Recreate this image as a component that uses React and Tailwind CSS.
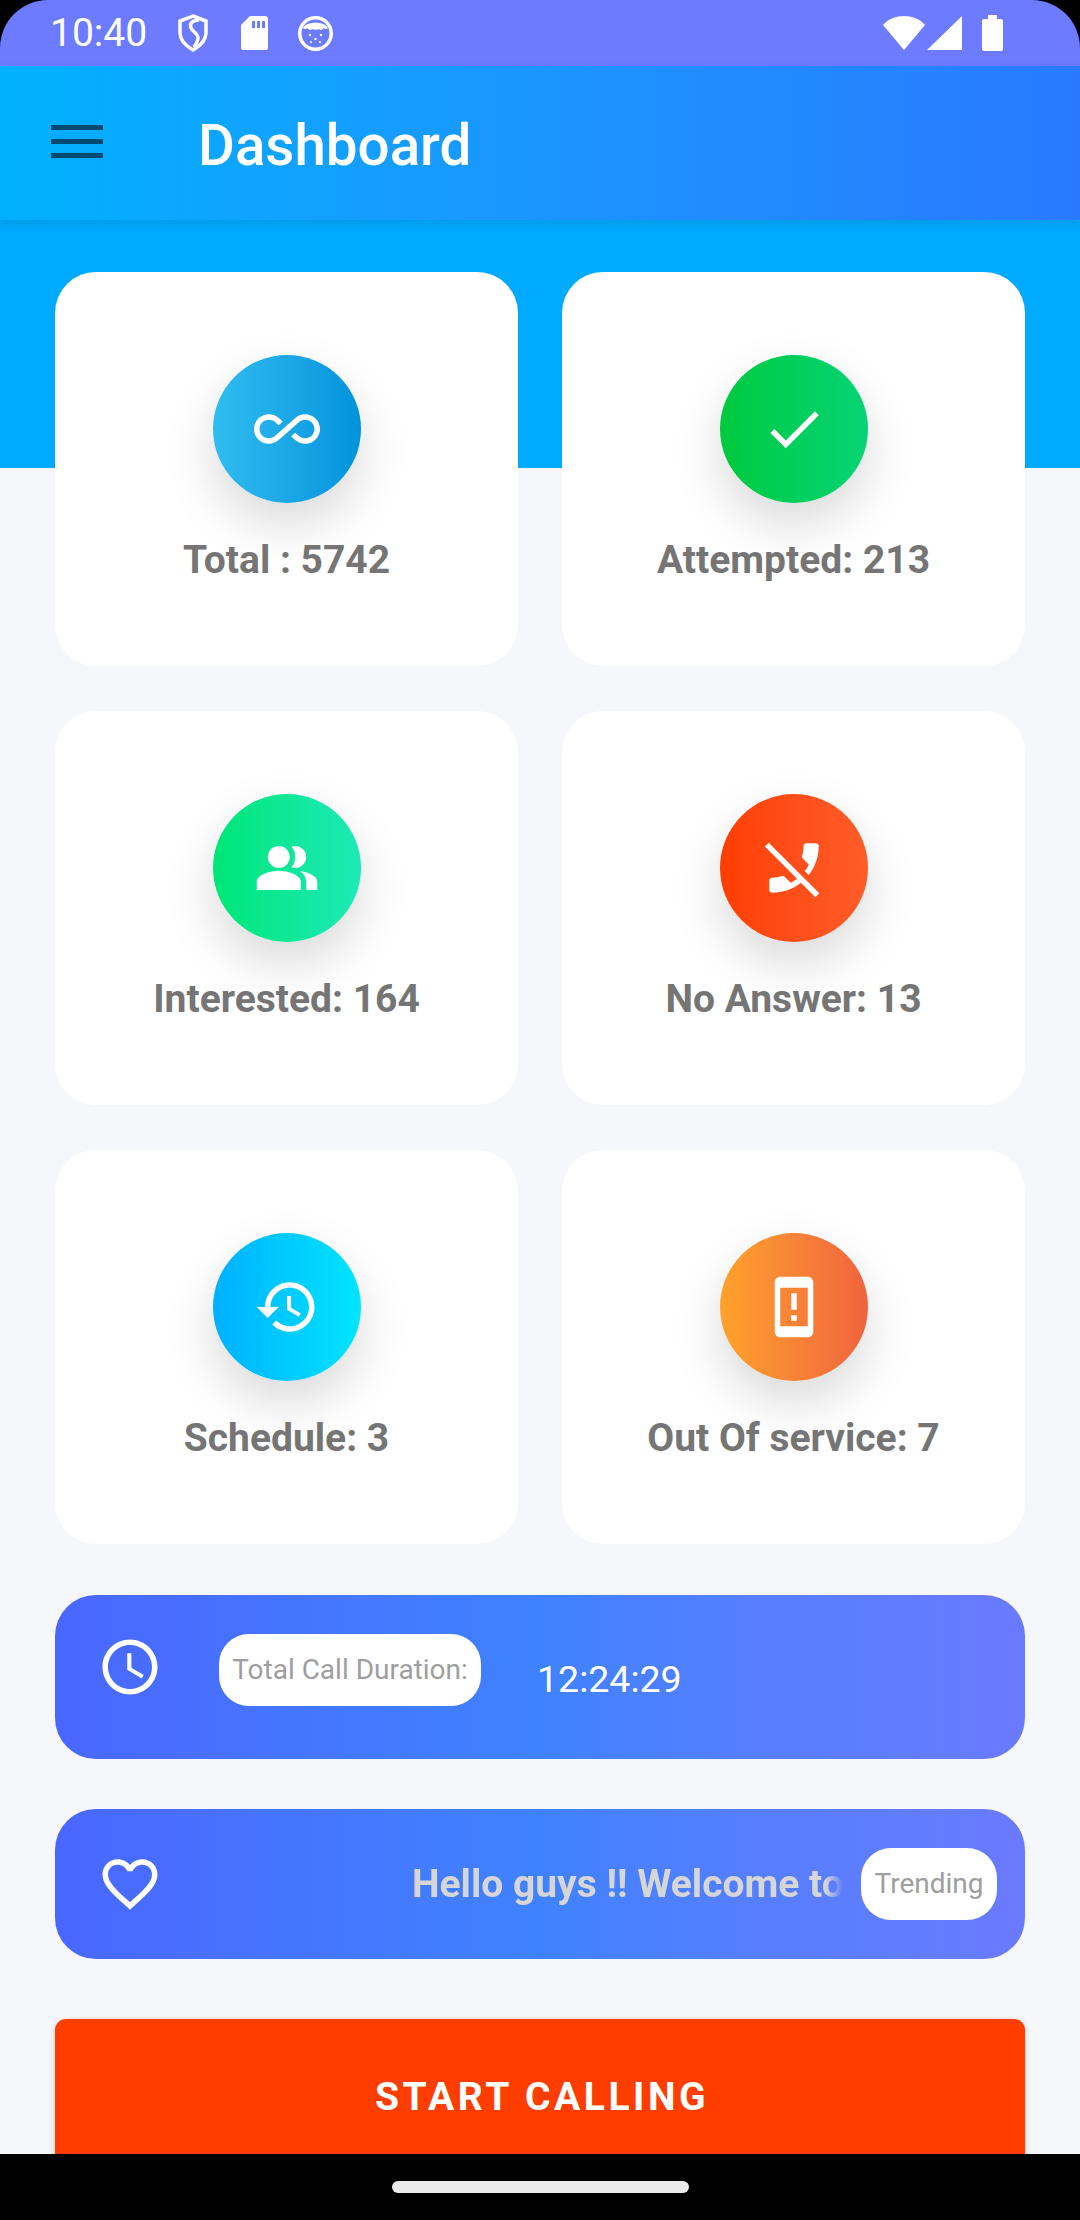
import React from 'react'

const stats = [
  {
    label: 'Total : 5742',
    gradient: 'from-[#2fbdf0] to-[#0093dc]',
    icon: <path d="M18.6 6.62c-1.44 0-2.8.56-3.77 1.53L12 10.66 10.48 12h.01L7.8 14.39c-.64.64-1.49.99-2.4.99-1.87 0-3.39-1.51-3.39-3.38S3.53 8.62 5.4 8.62c.91 0 1.76.35 2.44 1.03l1.13 1 1.51-1.34L9.22 8.2C8.2 7.18 6.84 6.62 5.4 6.62 2.42 6.62 0 9.04 0 12s2.42 5.38 5.4 5.38c1.44 0 2.8-.56 3.77-1.53l2.83-2.5.01.01L13.52 12h-.01l2.69-2.39c.64-.64 1.49-.99 2.4-.99 1.87 0 3.39 1.51 3.39 3.38s-1.52 3.38-3.39 3.38c-.9 0-1.76-.35-2.44-1.03l-1.14-1.01-1.51 1.34 1.27 1.12c1.02 1.01 2.37 1.57 3.82 1.57 2.98 0 5.4-2.41 5.4-5.38s-2.42-5.37-5.4-5.37z" />,
  },
  {
    label: 'Attempted: 213',
    gradient: 'from-[#00c93c] to-[#06d474]',
    icon: <path d="M9 16.17L4.83 12l-1.42 1.41L9 19 21 7l-1.41-1.41z" />,
  },
  {
    label: 'Interested: 164',
    gradient: 'from-[#00e676] to-[#1de9b6]',
    icon: (
      <>
        <path d="M16.67 13.13C18.04 14.06 19 15.32 19 17v3h4v-3c0-2.18-3.57-3.47-6.33-3.87z" />
        <circle cx="9" cy="8" r="4" />
        <path d="M15 12c2.21 0 4-1.79 4-4s-1.79-4-4-4c-.47 0-.91.1-1.33.24C14.5 5.27 15 6.58 15 8s-.5 2.73-1.33 3.76c.42.14.86.24 1.33.24z" />
        <path d="M9 13c-2.67 0-8 1.34-8 4v3h16v-3c0-2.66-5.33-4-8-4z" />
      </>
    ),
  },
  {
    label: 'No Answer: 13',
    gradient: 'from-[#ff3d00] to-[#ff5c28]',
    icon: <path d="M17.34 14.54l-1.43-1.43c.56-.73 1.05-1.5 1.47-2.32l-2.2-2.2c-.28-.28-.36-.67-.25-1.02.37-1.12.57-2.32.57-3.57 0-.55.45-1 1-1H20c.55 0 1 .45 1 1 0 3.98-1.37 7.64-3.66 10.54zm-2.82 2.81C11.63 19.64 7.97 21 4 21c-.55 0-1-.45-1-1v-3.49c0-.55.45-1 1-1 1.24 0 2.45-.2 3.57-.57.35-.12.75-.03 1.02.24l2.2 2.2c.81-.42 1.58-.9 2.3-1.46L1.39 4.22l1.42-1.41L21.19 21.2l-1.41 1.41-5.26-5.26z" />,
  },
  {
    label: 'Schedule: 3',
    gradient: 'from-[#00b0ff] to-[#00e5ff]',
    icon: <path d="M13 3c-4.97 0-9 4.03-9 9H1l3.89 3.89.07.14L9 12H6c0-3.87 3.13-7 7-7s7 3.13 7 7-3.13 7-7 7c-1.93 0-3.68-.79-4.94-2.06l-1.42 1.42C8.27 19.99 10.51 21 13 21c4.97 0 9-4.03 9-9s-4.03-9-9-9zm-1 5v5l4.28 2.54.72-1.21-3.5-2.08V8H12z" />,
  },
  {
    label: 'Out Of service: 7',
    gradient: 'from-[#ffa22b] to-[#f0633d]',
    icon: <path d="M17 1.01L7 1c-1.1 0-2 .9-2 2v18c0 1.1.9 2 2 2h10c1.1 0 2-.9 2-2V3c0-1.1-.9-1.99-2-1.99zM17 19H7V5h10v14zm-4-4h-2v2h2v-2zm0-8h-2v6h2V7z" />,
  },
]

const StatCard = ({ stat }) => (
  <div className="h-[394px] bg-white rounded-[41px] flex flex-col items-center pt-[83px]">
    <div className={`w-[148px] h-[148px] rounded-full bg-linear-to-r ${stat.gradient} shadow-[0_22px_50px_rgba(0,0,0,0.15)] flex items-center justify-center`}>
      <svg viewBox="0 0 24 24" fill="white" className="w-[66px] h-[66px]">{stat.icon}</svg>
    </div>
    <p className="mt-[35px] text-[39px] leading-[45px] font-bold text-[#757575]">{stat.label}</p>
  </div>
)

const StatusBar = () => (
  <div className="h-[66px] shrink-0 bg-[#6c7bff] rounded-t-[48px] flex items-center pl-[50px] pr-[77px] text-white">
    <span className="text-[39px] leading-none w-[128px]">10:40</span>
    <svg viewBox="0 0 30 38" fill="none" stroke="white" strokeWidth="3.5" className="w-[30px] h-[38px]">
      <path d="M15 2l13 5v12c0 8-6 13-13 17C8 32 2 27 2 19V7z" />
      <path d="M21 6c-6 0-10 3-8 8 2 4 8 6 7 11-.5 3-2 5-4 8" />
    </svg>
    <svg viewBox="0 0 27 34" fill="white" className="w-[27px] h-[34px] ml-[33px]">
      <path d="M9 0h15a3 3 0 0 1 3 3v29a2 2 0 0 1-2 2H2a2 2 0 0 1-2-2V9z" />
      <path d="M11 5h3v7h-3zM16 5h3v7h-3zM21 5h3v7h-3z" fill="#6c7bff" />
    </svg>
    <svg viewBox="0 0 35 35" className="w-[35px] h-[35px] ml-[30px]">
      <circle cx="17.5" cy="17.5" r="17.5" fill="white" />
      <circle cx="17.5" cy="17.5" r="14" fill="#6c7bff" />
      <path d="M5 12C8 5 27 5 30 12c-1 1-3 2-4 0-2 2-4 3-5 1-2 1-5 1-7 0-1 2-3 1-5-1-1 2-3 1-4 0z" fill="white" />
      <circle cx="12" cy="19" r="1.2" fill="white" />
      <circle cx="23" cy="19" r="1.2" fill="white" />
      <circle cx="17.5" cy="23" r="1.2" fill="white" />
      <circle cx="13" cy="26" r="1" fill="white" />
      <circle cx="22" cy="26" r="1" fill="white" />
    </svg>
    <div className="flex-1" />
    <svg viewBox="0 0 42 34" fill="white" className="w-[42px] h-[34px]">
      <path d="M21 34L0 9C5 3 13 0 21 0s16 3 21 9z" />
    </svg>
    <svg viewBox="0 0 35 34" fill="white" className="w-[35px] h-[34px] ml-[2px]">
      <path d="M35 0v34H0z" />
    </svg>
    <svg viewBox="0 0 21 36" fill="white" className="w-[21px] h-[36px] ml-[20px]">
      <path d="M6 0h9v4h4a2 2 0 0 1 2 2v28a2 2 0 0 1-2 2H2a2 2 0 0 1-2-2V6a2 2 0 0 1 2-2h4z" />
    </svg>
  </div>
)

export default function App() {
  return (
    <div className="w-[1080px] h-[2220px] bg-black flex flex-col overflow-hidden font-['Roboto',sans-serif]">
      <StatusBar />

      <header className="h-[154px] shrink-0 z-10 bg-linear-to-r from-[#00b0ff] to-[#2979ff] shadow-[0_4px_10px_rgba(0,0,0,0.1)] flex items-center pl-[51px]">
        <div className="w-[52px] -mt-[3px] flex flex-col gap-[9px]">
          <div className="h-[5px] bg-[#004a72]" />
          <div className="h-[5px] bg-[#004a72]" />
          <div className="h-[5px] bg-[#004a72]" />
        </div>
        <h1 className="ml-[95px] mt-[6px] text-[56.5px] leading-none font-medium text-white">Dashboard</h1>
      </header>

      <main className="flex-1 min-h-0 overflow-hidden px-[55px] pt-[52px] bg-[linear-gradient(#00aaff_248px,#f6f7fa_248px)]">
        <div className="grid grid-cols-2 gap-x-[44px] gap-y-[45px]">
          {stats.map((stat) => (
            <StatCard key={stat.label} stat={stat} />
          ))}
        </div>

        <div className="mt-[51px] h-[164px] rounded-[41px] bg-linear-to-r from-[#4a67ff] via-[#3f82ff] to-[#6a7aff] flex items-start pl-[42px]">
          <svg viewBox="0 0 24 24" fill="white" className="w-[66px] h-[66px] mt-[39px]">
            <path d="M11.99 2C6.47 2 2 6.48 2 12s4.470 10 9.990 10C17.520 22 22 17.520 22 12S17.520 2 11.990 2zM12 20c-4.420 0-8-3.580-8-8s3.580-8 8-8 8 3.580 8 8-3.580 8-8 8zm.5-13H11v6l5.250 3.150.750-1.230-4.500-2.670z" />
          </svg>
          <div className="ml-[56px] mt-[39px] h-[72px] w-[262px] rounded-[30px] bg-white flex items-center justify-center text-[28px] text-[#9e9e9e]">
            Total Call Duration:
          </div>
          <span className="ml-[56px] mt-[62px] text-[37.5px] leading-[45px] text-white">12:24:29</span>
        </div>

        <div className="mt-[50px] h-[150px] rounded-[41px] bg-linear-to-r from-[#4a67ff] via-[#3f82ff] to-[#6a7aff] flex items-center pl-[42px]">
          <svg viewBox="0 0 24 24" fill="white" className="w-[66px] h-[66px]">
            <path d="M16.500 3c-1.740 0-3.410.810-4.500 2.090C10.910 3.810 9.240 3 7.500 3 4.420 3 2 5.420 2 8.500c0 3.780 3.400 6.860 8.550 11.540L12 21.350l1.450-1.320C18.600 15.360 22 12.280 22 8.500 22 5.420 19.580 3 16.500 3zm-4.400 15.550l-.1.100-.1-.100C7.140 14.240 4 11.390 4 8.500 4 6.500 5.500 5 7.500 5c1.540 0 3.040.990 3.570 2.360h1.870C13.460 5.990 14.960 5 16.500 5c2 0 3.500 1.500 3.500 3.500 0 2.890-3.140 5.740-7.900 10.050z" />
          </svg>
          <div className="ml-[249px] w-[431px] overflow-hidden [mask-image:linear-gradient(to_right,black_96%,transparent)]">
            <p className="whitespace-nowrap text-[39px] leading-[45px] font-bold text-[#d6d6d6]">Hello guys !! Welcome to</p>
          </div>
          <div className="ml-[18px] h-[72px] w-[136px] shrink-0 rounded-[30px] bg-white flex items-center justify-center text-[28px] text-[#9e9e9e]">
            Trending
          </div>
        </div>

        <button className="mt-[60px] w-full h-[156px] pl-[4px] rounded-[11px] bg-[#ff3d00] shadow-[0_2px_6px_rgba(0,0,0,0.2)] text-white text-[39px] font-bold tracking-[0.09em]">
          START CALLING
        </button>
      </main>

      <div className="h-[66px] shrink-0 bg-black flex items-center justify-center">
        <div className="w-[297px] h-[12px] rounded-full bg-[#ebebeb]" />
      </div>
    </div>
  )
}
